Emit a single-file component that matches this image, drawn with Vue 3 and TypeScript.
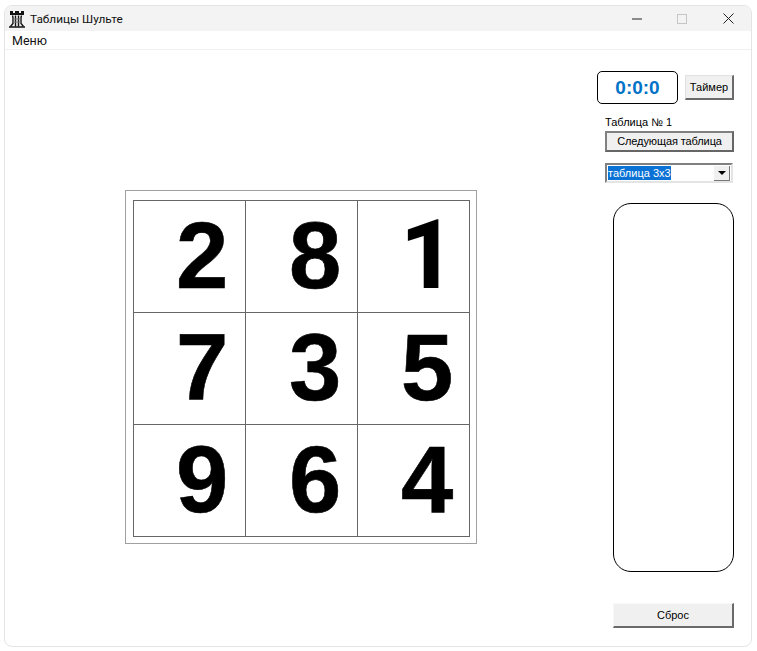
<script setup lang="ts">
const digits: number[] = [2, 8, 1, 7, 3, 5, 9, 6, 4]
</script>

<template>
  <div class="page">
    <div class="window">
      <header class="titlebar">
        <svg class="app-icon" width="18" height="18" viewBox="0 0 18 18">
          <path d="M2 1h3v2h2V1h4v2h2V1h3v4H2V1z" fill="#111" />
          <path d="M4.5 5.5l.5 2v6l-2.5 3M7.5 5.5v11M10.5 5.5v11M13.5 5.5l-.5 2v6l2.5 3" stroke="#111" stroke-width="1.4" fill="none" />
          <path d="M1 17h16" stroke="#111" stroke-width="1.4" />
          <path d="M5 9h8M5 12h8" stroke="#777" stroke-width="1" />
        </svg>
        <span class="title">Таблицы Шульте</span>
        <div class="controls">
          <svg width="10" height="10" viewBox="0 0 10 10" class="ctl min"><path d="M0 5h10" stroke="#222" stroke-width="1" /></svg>
          <svg width="10" height="10" viewBox="0 0 10 10" class="ctl max"><rect x=".5" y=".5" width="9" height="9" fill="none" stroke="#c6c6c6" /></svg>
          <svg width="11" height="11" viewBox="0 0 11 11" class="ctl close"><path d="M.5.5l10 10M10.5.5l-10 10" stroke="#222" stroke-width="1" fill="none" /></svg>
        </div>
      </header>
      <nav class="menu">Меню</nav>
      <main class="content">
        <section class="board-frame">
          <div class="board">
            <div v-for="d in digits" :key="d" class="cell" :class="{ one: d === 1 }">{{ d }}</div>
          </div>
        </section>
        <aside class="panel">
          <div class="timer-row">
            <div class="timer">0:0:0</div>
            <button class="btn timer-btn">Таймер</button>
          </div>
          <div class="label">Таблица № 1</div>
          <button class="btn next-btn">Следующая таблица</button>
          <div class="select">
            <span class="selected">таблица 3х3</span>
            <span class="arrow"><i></i></span>
          </div>
          <div class="results"></div>
          <button class="btn reset-btn">Сброс</button>
        </aside>
      </main>
    </div>
  </div>
</template>

<style scoped>
.page {
  width: 757px;
  height: 651px;
  box-sizing: border-box;
  padding: 5px 5px 4px 4px;
  background: #fff;
  overflow: hidden;
}
.window {
  height: 642px;
  box-sizing: border-box;
  border: 1px solid #e4e4e4;
  border-radius: 8px;
  overflow: hidden;
  display: flex;
  flex-direction: column;
  background: #fff;
  font-family: "Liberation Sans", Arial, sans-serif;
  color: #000;
}
.titlebar {
  height: 25px;
  flex: none;
  display: flex;
  align-items: center;
  background: #f3f3f3;
  padding-left: 3px;
}
.app-icon {
  flex: none;
}
.title {
  margin-left: 4px;
  font-family: Roboto, sans-serif;
  font-size: 11.8px;
  color: #111;
}
.controls {
  margin-left: auto;
  display: flex;
  align-items: center;
}
.ctl {
  flex: none;
}
.min {
  margin-right: 35px;
}
.max {
  margin-right: 36px;
}
.close {
  margin-right: 17px;
}
.menu {
  height: 19px;
  flex: none;
  box-sizing: border-box;
  border-bottom: 1px solid #f0f0f0;
  padding-left: 7px;
  font-family: Roboto, sans-serif;
  font-size: 12.5px;
  line-height: 19px;
  color: #111;
}
.content {
  flex: 1;
  display: flex;
  align-items: flex-start;
}
.board-frame {
  margin: 140px 0 0 120px;
  width: 352px;
  height: 354px;
  box-sizing: border-box;
  border: 1px solid #a0a0a0;
  padding: 9px 0 0 7px;
  flex: none;
}
.board {
  display: grid;
  grid-template-columns: repeat(3, 112px);
  grid-template-rows: repeat(3, 112px);
  width: 337px;
  height: 337px;
  box-sizing: border-box;
  border-top: 1px solid #666;
  border-left: 1px solid #666;
}
.cell {
  box-sizing: border-box;
  border-right: 1px solid #666;
  border-bottom: 1px solid #666;
  padding-left: 43px;
  font-family: "Liberation Sans", Arial, sans-serif;
  font-size: 94px;
  font-weight: 700;
  line-height: 109px;
  -webkit-text-stroke: 0.6px #000;
  color: #000;
}
.cell:nth-child(3n + 1) {
  padding-left: 42px;
}
.cell.one {
  padding-left: 42px;
  font-family: Roboto, "Liberation Sans", sans-serif;
  font-size: 96px;
  font-weight: 800;
  -webkit-text-stroke: 0;
}
.panel {
  margin-left: 120px;
  width: 140px;
  flex: none;
  display: flex;
  flex-direction: column;
  font-size: 11px;
}
.timer-row {
  margin-top: 21px;
  display: flex;
  align-items: center;
  gap: 7px;
}
.timer {
  width: 81px;
  height: 33px;
  box-sizing: border-box;
  border: 1px solid #000;
  border-radius: 5px;
  text-align: center;
  font-size: 19px;
  font-weight: 700;
  line-height: 31px;
  color: #0072c8;
}
.btn {
  margin: 0;
  padding: 0;
  box-sizing: border-box;
  background: #f0f0f0;
  border: 1px solid;
  border-color: #f8f8f8 #6a6a6a #6a6a6a #f8f8f8;
  font-family: "Liberation Sans", Arial, sans-serif;
  font-size: 11px;
  color: #000;
}
.timer-btn {
  width: 49px;
  height: 25px;
  border-right-width: 2px;
  border-bottom-width: 2px;
  border-top-color: #e0e0e0;
  border-left-color: #e0e0e0;
}
.label {
  margin: 12px 0 0 8px;
  line-height: 12px;
  height: 13px;
}
.next-btn {
  margin: 2px 0 0 8px;
  width: 129px;
  height: 21px;
  padding-bottom: 2px;
  border: 2px solid #666;
  border-top-color: #808080;
  border-left-color: #808080;
  letter-spacing: -0.1px;
}
.select {
  margin: 11px 0 0 8px;
  width: 128px;
  height: 20px;
  box-sizing: border-box;
  border: 2px solid;
  border-color: #808080 #e4e4e4 #e4e4e4 #808080;
  display: flex;
  align-items: center;
  padding: 0 1px 0 0;
  background: #fff;
}
.selected {
  background: #0a72d4;
  margin-left: 1px;
  color: #fff;
  line-height: 14px;
}
.arrow {
  margin-left: auto;
  width: 16px;
  height: 15px;
  background: #f0f0f0;
  border-right: 1px solid #777;
  border-bottom: 1px solid #777;
  box-sizing: border-box;
  display: flex;
  align-items: center;
  justify-content: center;
}
.arrow i {
  display: block;
  width: 0;
  height: 0;
  border-left: 4px solid transparent;
  border-right: 4px solid transparent;
  border-top: 4px solid #000;
}
.results {
  margin: 20px 0 0 16px;
  width: 121px;
  height: 369px;
  box-sizing: border-box;
  border: 1px solid #000;
  border-radius: 18px;
}
.reset-btn {
  margin: 31px 0 0 16px;
  width: 121px;
  height: 25px;
  border-right-width: 2px;
  border-bottom-width: 2px;
}
</style>
